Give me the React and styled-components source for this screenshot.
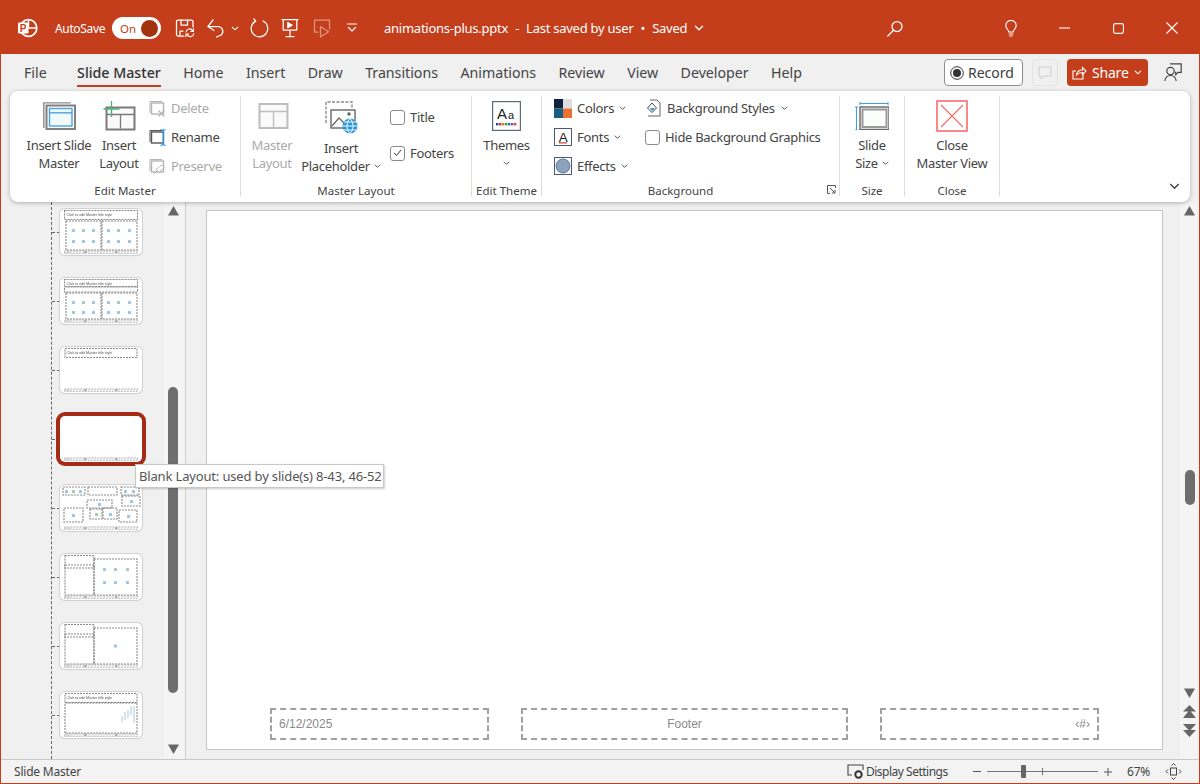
import React from "react";
import styled, { createGlobalStyle } from "styled-components";

const ORANGE = "#C43E1C";
const FONT = `"Noto Sans", "Open Sans", "Liberation Sans", sans-serif`;

const Global = createGlobalStyle`
  html, body { margin: 0; padding: 0; background: ${ORANGE}; }
  * { box-sizing: border-box; }
  svg { display: block; flex: none; }
`;

const Page = styled.div`
  position: relative; width: 1200px; height: 784px; overflow: hidden;
  display: flex; flex-direction: column;
  font-family: ${FONT}; color: #424242; background: ${ORANGE};
`;

/* ---------- title bar ---------- */
const TitleBar = styled.header`
  height: 54px; flex: none; display: flex; align-items: center; padding-top: 2px; color: #fff;
`;
const Slot = styled.div`
  margin-left: ${(p) => p.$ml}px; width: ${(p) => p.$w}px; flex: none;
  display: flex; justify-content: center; align-items: center;
  opacity: ${(p) => p.$fade || 1};
`;
const AutoSaveLabel = styled.span`
  margin-left: 17px; width: 48px; flex: none; font-size: 12px; letter-spacing: -0.35px; white-space: nowrap;
`;
const Toggle = styled.div`
  margin-left: 9px; width: 49px; height: 22px; flex: none; border-radius: 11px; background: #fff;
  display: flex; align-items: center; justify-content: space-between; padding: 0 3px 0 8px;
  color: ${ORANGE}; font-size: 11.5px;
`;
const Knob = styled.span`
  width: 17px; height: 17px; border-radius: 50%; background: #A3330F;
`;
const DocTitle = styled.div`
  margin-left: 27px; width: 320px; flex: none; display: flex; align-items: center; gap: 7px;
  font-size: 13px; letter-spacing: -0.25px; white-space: nowrap;
`;

/* ---------- window frame ---------- */
const Frame = styled.div`
  flex: 1; min-height: 0; display: flex; flex-direction: column;
  margin: 0 1px 1px; background: #f0f0f0;
`;
const TabRow = styled.nav`
  height: 36px; flex: none; display: flex; align-items: flex-start; padding: 6px 17px 0 23px; gap: 22.4px;
`;
const Tab = styled.div`
  height: 27px; line-height: 25px; font-size: 14.2px; white-space: nowrap;
  margin-left: ${(p) => (p.$active ? 8 : 0)}px;
  color: ${(p) => (p.$active ? "#333" : "#444")};
  font-weight: ${(p) => (p.$active ? 500 : 400)};
  border-bottom: 2px solid ${(p) => (p.$active ? ORANGE : "transparent")};
`;
const TabTools = styled.div`
  margin: -1px 0 0 auto; display: flex; align-items: flex-start; gap: 9px; height: 27px;
`;
const RecordButton = styled.div`
  width: 79px; height: 27px; background: #fff; border: 1px solid #8f8f8f; border-radius: 4px;
  display: flex; align-items: center; gap: 4px; padding-left: 5px; font-size: 14px; color: #3c3c3c;
`;
const CommentButton = styled.div`
  width: 26px; height: 27px; border: 1px solid #e4e4e4; border-radius: 4px; display: flex; align-items: center; justify-content: center;
`;
const ShareButton = styled.div`
  width: 81px; height: 27px; background: ${ORANGE}; color: #fff; border-radius: 4px;
  display: flex; align-items: center; gap: 5px; padding-left: 5px; font-size: 14px; letter-spacing: -0.2px;
`;
const PersonSlot = styled.div` margin: 3px 0 0 7px; `;

/* ---------- ribbon ---------- */
const Ribbon = styled.section`
  position: relative; height: 111px; flex: none; margin: 1px 9px 0; background: #fff; border-radius: 8px;
  box-shadow: 0 1px 4px rgba(0,0,0,.28); display: flex; align-items: flex-start; padding-top: 5px;
`;
const Group = styled.div`
  position: relative; width: ${(p) => p.$w}px; height: 100px; flex: none; display: flex; flex-direction: column;
  border-right: 1px solid #dcdcdc;
`;
const GroupBody = styled.div`
  flex: 1; min-height: 0; display: flex; padding-left: ${(p) => p.$pl || 0}px;
`;
const GroupLabel = styled.div`
  height: 12px; line-height: 14px; text-align: center; font-size: 11.5px; color: #444; white-space: nowrap;
  padding-right: ${(p) => p.$pr || 0}px;
`;
const Big = styled.div`
  width: ${(p) => p.$w}px; margin-left: ${(p) => p.$ml || 0}px; flex: none; display: flex; flex-direction: column; align-items: center;
  color: ${(p) => (p.$off ? "#aaa" : "#444")};
`;
const BigIcon = styled.div`
  height: ${(p) => p.$h || 40}px; flex: none; display: flex; align-items: center; justify-content: center;
`;
const BigLine = styled.div`
  height: 18px; line-height: 18px; font-size: 13px; letter-spacing: -0.32px; white-space: nowrap; display: flex; align-items: center; gap: 4px;
`;
const SmallColumn = styled.div`
  width: ${(p) => p.$w || "auto"}; margin-left: ${(p) => p.$ml || 0}px; padding-top: ${(p) => p.$pt || 0}px;
  flex: none; display: flex; flex-direction: column; gap: ${(p) => p.$gap ?? 5}px;
`;
const SmallRow = styled.div`
  height: 24px; display: flex; align-items: center; gap: ${(p) => p.$gap ?? 5}px; font-size: 13px; letter-spacing: -0.3px; white-space: nowrap;
  color: ${(p) => (p.$off ? "#aaa" : "#444")};
`;
const Check = styled.span`
  width: 15px; height: 15px; flex: none; border: 1px solid #8a8a8a; border-radius: 3px; background: #fff;
  display: flex; align-items: center; justify-content: center;
`;
const Launcher = styled.div`
  position: absolute; right: 3px; bottom: 2px;
`;
const Collapse = styled.div`
  position: absolute; right: 10px; bottom: 12px;
`;

/* ---------- body ---------- */
const Body = styled.main`
  flex: 1; min-height: 0; display: flex;
`;
const Panel = styled.aside`
  width: 163px; flex: none; overflow: hidden;
`;
const Tree = styled.div`
  height: 100%; margin-left: 50px; border-left: 1px dashed #666; padding-top: 7px; display: flex; flex-direction: column; gap: 23px;
`;
const ThumbRow = styled.div`
  display: flex; align-items: center;
`;
const Tick = styled.span`
  width: 8px; border-top: 1px dashed #666; flex: none;
`;
const Thumb = styled.div`
  width: 82px; height: 46px; flex: none; background: #fff; border-radius: 5px; overflow: hidden;
  box-shadow: ${(p) => (p.$on ? "0 0 0 4px #A62B16" : "0 0 0 1px #d2d2d2, 0 1px 1px rgba(0,0,0,.12)")};
`;
const MiniSvg = styled.svg`
  filter: blur(0.3px);
`;
const Scroll = styled.div`
  width: ${(p) => p.$w}px; flex: none; background: #f4f4f4; display: flex; flex-direction: column; align-items: center; padding-top: 4px;
  padding-right: ${(p) => (p.$edge ? 3 : 0)}px;
  border-right: ${(p) => (p.$edge ? "1px solid #cfcfcf" : "none")};
`;
const ScrollThumb = styled.div`
  width: 10px; height: ${(p) => p.$h}px; margin-top: ${(p) => p.$mt}px; border-radius: 5px; background: #6e6e6e; flex: none;
`;
const ArrowSlot = styled.div`
  margin-top: ${(p) => p.$mt || 0}px; flex: none;
`;
const Stage = styled.div`
  flex: 1; min-width: 0; padding: 8px 17px 9px 20px; display: flex;
`;
const Slide = styled.div`
  flex: 1; background: #fff; border: 1px solid #c6c6c6; display: flex; align-items: flex-end; gap: 32px; padding: 0 0 9px 63px;
`;
const Placeholder = styled.div`
  width: ${(p) => p.$w}px; height: 32px; flex: none; border: 2px dashed #a0a0a0; font-family: "Liberation Sans", sans-serif;
  font-size: 12px; color: #8a8a8a; display: flex; align-items: center; padding: 0 7px;
  justify-content: ${(p) => p.$align || "flex-start"};
`;
const Tooltip = styled.div`
  position: absolute; left: 135px; top: 464px; width: 249px; height: 24px; background: #fff; border: 1px solid #c8c8c8;
  box-shadow: 1px 1px 2px rgba(0,0,0,.2); font-size: 13px; letter-spacing: -0.16px; color: #555; line-height: 22px; padding-left: 3px; white-space: nowrap;
`;

/* ---------- status bar ---------- */
const Status = styled.footer`
  height: 24px; flex: none; background: #f3f3f3; border-top: 1px solid #c9c9c9; display: flex; align-items: center;
  font-size: 12px; letter-spacing: -0.2px; color: #444; padding-left: 13px;
`;
const StatusText = styled.span`
  margin-left: ${(p) => p.$ml || 0}px; width: ${(p) => p.$w}px; flex: none; white-space: nowrap;
  letter-spacing: ${(p) => p.$ls ?? -0.2}px;
`;
const SliderTrack = styled.div`
  position: relative; margin-left: 6px; width: 111px; height: 1px; background: #777; flex: none;
`;
const SliderHandle = styled.span`
  position: absolute; left: 34px; top: -6px; width: 5px; height: 13px; background: #666; border-radius: 1px;
`;
const SliderMark = styled.span`
  position: absolute; left: 55px; top: -3px; width: 1px; height: 7px; background: #777;
`;

/* ---------- icons ---------- */
const Stroke = { fill: "none", stroke: "#fff", strokeWidth: 1.25, strokeLinecap: "round", strokeLinejoin: "round" };

const Chev = ({ w = 8, color = "#444", sw = 1.1 }) => (
  <svg width={w} height={w * 0.6} viewBox="0 0 8 5"><path d="M.8.8 4 4l3.2-3.2" fill="none" stroke={color} strokeWidth={sw} /></svg>
);
const Logo = () => (
  <svg width="20" height="20" viewBox="0 0 20 20">
    <circle cx="10.5" cy="10" r="8.3" fill="none" stroke="#fff" strokeWidth="1.8" />
    <path d="M10.5 2v8h8" fill="none" stroke="#fff" strokeWidth="1.4" />
    <rect x="0" y="4.5" width="10.5" height="11" rx="1.2" fill="#fff" />
    <text x="5.2" y="13.6" textAnchor="middle" fontFamily="Liberation Sans" fontWeight="700" fontSize="10" fill={ORANGE}>P</text>
  </svg>
);
const SaveSync = () => (
  <svg width="20" height="20" viewBox="0 0 20 20" {...Stroke}>
    <path d="M9 18H3a1.5 1.5 0 0 1-1.5-1.5v-13A1.5 1.5 0 0 1 3 2h13.5A1.5 1.5 0 0 1 18 3.5V9" />
    <path d="M6 2v5h6.5V2M5 18v-5h3" />
    <path d="M11 14a3.6 3.6 0 0 1 6.3-1.8l1 1.1M18.8 15.5a3.6 3.6 0 0 1-6.4 1.7l-1-1M18.5 10.8v2.6h-2.6M11 18.6V16h2.6" strokeWidth="1.1" />
  </svg>
);
const Undo = () => (
  <svg width="18" height="19" viewBox="0 0 18 19" {...Stroke}>
    <path d="M1 7.500h10a5 5 0 0 1 3.500 8.400L9.500 18" />
    <path d="M6 1 1 7.500l6 4" />
  </svg>
);
const Redo = () => (
  <svg width="20" height="20" viewBox="0 0 20 20" {...Stroke}>
    <path d="M6.500 3.200A8.300 8.300 0 1 0 14 3" />
    <path d="M5 .8l1.700 2.500L4 5" />
  </svg>
);
const Present = () => (
  <svg width="18" height="20" viewBox="0 0 18 20" {...Stroke}>
    <path d="M1 1.500h16M2.200 1.500v10.500h13.600V1.500M9 12v6M5 18.500h8" />
    <path d="M7 4.500l4.500 2.700L7 9.800z" fill="#fff" strokeWidth="1" />
  </svg>
);
const Ghost = () => (
  <svg width="18" height="20" viewBox="0 0 18 20" {...Stroke}>
    <path d="M5 14H1.500V2h15v9" />
    <path d="M7.500 8.500l8 5.200-8 5.300z" />
  </svg>
);
const MoreChev = () => (
  <svg width="10" height="10" viewBox="0 0 10 10" {...Stroke} strokeWidth="1.1"><path d="M.5 1h9M1.500 4.500 5 8l3.500-3.500" /></svg>
);
const Search = () => (
  <svg width="16" height="17" viewBox="0 0 16 17" {...Stroke}>
    <circle cx="10" cy="6.500" r="5" /><path d="M6.500 10.200.8 16" />
  </svg>
);
const Bulb = () => (
  <svg width="12" height="17" viewBox="0 0 12 17" {...Stroke} strokeWidth="1.1">
    <path d="M3.800 12c0-2-3-3.300-3-6.400a5.200 5.200 0 0 1 10.400 0c0 3.100-3 4.400-3 6.400z" /><path d="M4 14h4M4.800 16h2.400" />
  </svg>
);
const Minimize = () => <svg width="11" height="2" viewBox="0 0 11 2"><path d="M0 1h11" stroke="#fff" strokeWidth="1.1" /></svg>;
const Maximize = () => <svg width="11" height="11" viewBox="0 0 11 11"><rect x=".6" y=".6" width="9.800" height="9.800" rx="1.800" fill="none" stroke="#fff" strokeWidth="1.100" /></svg>;
const CloseX = () => <svg width="12" height="12" viewBox="0 0 12 12"><path d="M.5.5l11 11M11.500.5l-11 11" stroke="#fff" strokeWidth="1.100" /></svg>;

const RecordDot = () => (
  <svg width="14" height="14" viewBox="0 0 14 14"><circle cx="7" cy="7" r="6.300" fill="none" stroke="#333" strokeWidth="1" /><circle cx="7" cy="7" r="4" fill="#333" /></svg>
);
const Comment = () => (
  <svg width="14" height="14" viewBox="0 0 14 14"><path d="M1 1h12v9H6l-3 3v-3H1z" fill="none" stroke="#cfcfcf" strokeWidth="1" /></svg>
);
const ShareIcon = () => (
  <svg width="15" height="15" viewBox="0 0 15 15" fill="none" stroke="#fff" strokeWidth="1.100"><path d="M11 9v5H1V6h3" /><path d="M4.500 10c.5-3.500 3-5 6-5V2.500L14 6l-3.500 3.500V7.500c-2.500 0-4.500.8-6 2.500z" /></svg>
);
const PersonComment = () => (
  <svg width="18" height="20" viewBox="0 0 18 20" fill="none" stroke="#444" strokeWidth="1.200">
    <circle cx="6.500" cy="9" r="3.700" /><path d="M.8 19c.5-3.500 2.800-5.500 5.700-5.500s5.200 2 5.700 5.500" />
    <path d="M6 1.800h11.200v8.500h-3l-2.500 2.300v-2.300H11" />
  </svg>
);

const InsertMasterIcon = () => (
  <svg width="33" height="28" viewBox="0 0 33 28" fill="none">
    <path d="M.8 26V.9h27" stroke="#8a8a8a" strokeWidth="1.400" />
    <rect x="3.500" y="3.500" width="28.500" height="23.500" fill="#fff" stroke="#808080" strokeWidth="2" />
    <rect x="6.500" y="6.500" width="22.500" height="17.500" fill="#f2f9fd" stroke="#4aa3df" strokeWidth="1.400" />
    <path d="M6.500 10.800h22.500" stroke="#4aa3df" strokeWidth="1.400" />
  </svg>
);
const LayoutFrame = ({ c, plus }) => (
  <svg width="33" height="30" viewBox="0 0 33 30" fill="none">
    <rect x="3.500" y={plus ? 6.500 : 3} width="28" height={plus ? 22 : 24} fill="#fafafa" stroke={c} strokeWidth="2" />
    <path d={plus ? "M4 13.500h27M17.500 13.500v14" : "M3 10.500h28M17.500 10.500v16"} stroke={c} strokeWidth="1.300" />
    {plus && <path d="M8.500 0v16M.5 8h16" stroke="#4bb074" strokeWidth="1.300" />}
  </svg>
);
const SmallFrame = ({ c = "#b5b5b5", children }) => (
  <svg width="17" height="17" viewBox="0 0 17 17" fill="none">
    <path d="M1 13V1.500h12" stroke={c} strokeWidth="1" />
    <rect x="2.500" y="3" width="12" height="11" fill="#fff" stroke={c} strokeWidth="1.400" />
    {children}
  </svg>
);
const DeleteIcon = () => <SmallFrame><path d="M9.500 10.500l6 6M15.500 10.500l-6 6" stroke="#b5b5b5" strokeWidth="1.200" /></SmallFrame>;
const RenameIcon = () => (
  <SmallFrame c="#555">
    <path d="M11.500.7c1.800 0 2.700.5 2.700 1.600v12.400c0 1.100.9 1.600 2.300 1.600M16.500.7c-1.400 0-2.300.5-2.300 1.600M14.200 14.700c0 1.100-.9 1.600-2.700 1.600" stroke="#2f9be6" strokeWidth="1.300" />
  </SmallFrame>
);
const PreserveIcon = () => <SmallFrame><path d="M12.500 7l3 3-2 .8-2.500 2.500-.5 1.500-3.500-3.500 1.500-.6 2.500-2.500zM8 12.500l-3 3.500" stroke="#b5b5b5" strokeWidth="1" fill="#fff" /></SmallFrame>;
const PlaceholderIcon = () => (
  <svg width="33" height="34" viewBox="0 0 33 34" fill="none">
    <path d="M1 22V1h26v6" stroke="#8a8a8a" strokeWidth="1.400" strokeDasharray="3 1.500" />
    <rect x="6" y="9" width="24" height="18" fill="#fff" stroke="#666" strokeWidth="1.400" />
    <path d="M7 25l7-8 7 7" stroke="#666" strokeWidth="1.200" />
    <circle cx="24" cy="13" r="1.800" fill="#666" />
    <circle cx="25" cy="25" r="7.500" fill="#2f97d8" />
    <path d="M17.500 25h15M25 17.500c-4 4-4 11 0 15M25 17.500c4 4 4 11 0 15M19 21h12M19 29h12" stroke="#fff" strokeWidth=".9" />
  </svg>
);
const ThemesIcon = () => (
  <svg width="29" height="30" viewBox="0 0 29 30" fill="none">
    <rect x=".6" y=".6" width="27.800" height="28.800" fill="#fff" stroke="#5f6b78" strokeWidth="1.200" />
    <text x="5" y="18" fontFamily="Liberation Sans" fontSize="15" fill="#222">A</text>
    <text x="16" y="18" fontFamily="Liberation Sans" fontSize="11" fill="#222">a</text>
    {["#1f4e79", "#c0392b", "#e67e22", "#2e9e6b", "#2f6fbf", "#7d4fa0", "#d04a4a"].map((c, i) => (
      <rect key={c} x={4 + i * 3} y="22" width="2.400" height="2.400" fill={c} />
    ))}
  </svg>
);
const ColorsIcon = () => (
  <svg width="18" height="19" viewBox="0 0 18 19">
    <rect width="9" height="9.500" fill="#13233f" /><rect x="9" width="9" height="9.500" fill="#dedede" />
    <rect y="9.500" width="9" height="9.500" fill="#156082" /><rect x="9" y="9.500" width="9" height="9.500" fill="#E97132" />
  </svg>
);
const FontsIcon = () => (
  <svg width="18" height="18" viewBox="0 0 18 18">
    <rect x=".5" y=".5" width="17" height="17" fill="#fff" stroke="#4a5a78" />
    <text x="9" y="14" textAnchor="middle" fontFamily="Liberation Sans" fontSize="13.500" fill="#222">A</text>
    <rect x="5" y="14.300" width="8" height="1.200" fill="#d8432e" />
  </svg>
);
const EffectsIcon = () => (
  <svg width="18" height="18" viewBox="0 0 18 18">
    <rect x=".5" y=".5" width="17" height="17" fill="#fff" stroke="#4a5a78" />
    <circle cx="9" cy="9" r="7" fill="#8ba3bd" stroke="#5f7a96" />
  </svg>
);
const BgStylesIcon = () => (
  <svg width="16" height="18" viewBox="0 0 16 18" fill="none">
    <path d="M5 1h7l3 3v13H3" stroke="#666" strokeWidth="1" />
    <path d="M7 4l4.500 5L7 13.500 2.500 9z" fill="#fff" stroke="#444" strokeWidth="1" />
    <path d="M5 9h5L7 12.500z" fill="#3e9fe0" />
  </svg>
);
const SlideSizeIcon = () => (
  <svg width="34" height="28" viewBox="0 0 34 28" fill="none">
    <path d="M5 1.500h28M5 0v3M33 0v3M1.500 5v23M0 5h3M0 28h3" stroke="#3e9fe0" strokeWidth="1.100" />
    <rect x="5" y="5" width="29" height="22.500" fill="#f8f8f8" stroke="#666" strokeWidth="1.400" />
    <rect x="7.500" y="7.500" width="24" height="17.500" fill="#fbfdfb" stroke="#999" strokeWidth="2" />
  </svg>
);
const CloseMasterIcon = () => (
  <svg width="32" height="32" viewBox="0 0 32 32" fill="none">
    <rect x="1" y="1" width="30" height="30" fill="#fff" stroke="#f47c7c" strokeWidth="1.800" />
    <path d="M5 5l22 22M27 5L5 27" stroke="#f26a6a" strokeWidth="1.100" />
  </svg>
);
const LauncherIcon = () => (
  <svg width="9" height="9" viewBox="0 0 9 9" fill="none" stroke="#555" strokeWidth="1"><path d="M8.500 3V.5H.5v8H3" /><path d="M3 3l5 5M8 5v3H5" /></svg>
);
const Tri = ({ up, c = "#666" }) => (
  <svg width="11" height="10" viewBox="0 0 11 10"><path d={up ? "M5.500 0 11 9.500H0z" : "M0 .5h11L5.500 10z"} fill={c} /></svg>
);
const PagePrev = () => (
  <svg width="13" height="13" viewBox="0 0 13 13"><path d="M6.500 0 13 6.500H0zM6.500 5 13 13H0z" fill="#666" /></svg>
);
const PageNext = () => (
  <svg width="13" height="13" viewBox="0 0 13 13"><path d="M0 0h13L6.500 7zM0 6h13l-6.500 7z" fill="#666" /></svg>
);
const DisplayIcon = () => (
  <svg width="17" height="15" viewBox="0 0 17 15" fill="none">
    <path d="M5 11H1V1h15v5" stroke="#444" strokeWidth="1.100" />
    <circle cx="11.500" cy="10.500" r="3.200" stroke="#333" strokeWidth="2" />
  </svg>
);
const FitIcon = () => (
  <svg width="17" height="17" viewBox="0 0 17 17" fill="none" stroke="#444" strokeWidth="1">
    <rect x="5.500" y="5" width="6" height="7" /><path d="M6.500 2.500l2-2 2 2M6.500 14.500l2 2 2-2M3 6.500l-2 2 2 2M14 6.500l2 2-2 2" />
  </svg>
);

/* ---------- slide thumbnails (miniature drawings) ---------- */
const Box = ({ x, y, w, h }) => (
  <rect x={x} y={y} width={w} height={h} fill="none" stroke="#8a8a8a" strokeWidth="1.100" strokeDasharray="2 1" />
);
const Dot = ({ x, y, c = "#7fb7e0" }) => <rect x={x} y={y} width="3" height="3" rx=".6" fill={c} opacity=".8" />;
const Head = () => (
  <text x="6.500" y="7" fontFamily="Liberation Sans" fontSize="3.600" fill="#555">Click to edit Master title style</text>
);
const Foot = () => (
  <>
    <rect x="4.500" y="42" width="73" height="2.200" fill="none" stroke="#a0a0a0" strokeWidth=".9" strokeDasharray="2 1" />
    <rect x="5.500" y="42.500" width="5" height="1.200" fill="#ccc" />
    <rect x="24" y="42.500" width="2.500" height="1.200" fill="#888" />
    <rect x="55" y="42.500" width="2.500" height="1.200" fill="#888" />
  </>
);
const IconGrid = ({ xs, y1, y2 }) => (
  <>
    {xs.map((x, i) => <Dot key={`a${x}`} x={x} y={y1} c={i === 1 ? "#86c29a" : "#8db8d8"} />)}
    {xs.map((x) => <Dot key={`b${x}`} x={x} y={y2} />)}
  </>
);
const Layouts = {
  two: () => (<><Head /><Box x={4.500} y={1.500} w={73} h={9} /><Box x={6} y={12} w={35} h={29} /><Box x={42} y={12} w={35} h={29} /><IconGrid xs={[12, 22, 32]} y1={20} y2={31} /><IconGrid xs={[47, 57, 68]} y1={20} y2={31} /><Foot /></>),
  twoSub: () => (<><Head /><Box x={4.500} y={1.500} w={73} h={7} /><Box x={4.500} y={9} w={73} h={5} /><Box x={6} y={15} w={35} h={26} /><Box x={42} y={15} w={35} h={26} /><IconGrid xs={[12, 22, 32]} y1={23} y2={33} /><IconGrid xs={[47, 57, 68]} y1={23} y2={33} /><Foot /></>),
  title: () => (<><Head /><Box x={5} y={1.500} w={72} h={9} /><Foot /></>),
  blank: () => <Foot />,
  collage: () => (
    <>
      <Box x={3} y={2} w={22} h={8} /><Box x={28} y={2} w={29} h={8} /><Box x={61} y={2} w={18} h={8} /><Box x={62} y={11} w={18} h={10} />
      <Box x={4} y={23} w={19} h={14} /><Box x={27} y={15} w={25} h={8} /><Box x={30} y={24} w={12} h={10} /><Box x={43} y={23} w={14} h={11} /><Box x={59} y={25} w={18} h={12} />
      <Dot x={5} y={5} /><Dot x={12} y={5} c="#86c29a" /><Dot x={19} y={5} /><Dot x={64} y={5} /><Dot x={72} y={5} /><Dot x={70} y={15} /><Dot x={12} y={29} /><Dot x={38} y={18} /><Dot x={35} y={28} c="#86c29a" /><Dot x={49} y={28} /><Dot x={67} y={30} />
      <Foot />
    </>
  ),
  sideIcons: () => (<><Box x={5} y={1.500} w={29} h={39.500} /><Box x={5} y={11} w={29} h={3} /><Box x={34} y={5} w={43} h={36} /><IconGrid xs={[43, 54, 66]} y1={14} y2={27} /><Foot /></>),
  sidePic: () => (<><Box x={5} y={1.500} w={29} h={39.500} /><Box x={5} y={11} w={29} h={3} /><Box x={34} y={5} w={43} h={36} /><Dot x={54} y={21.500} /><Foot /></>),
  chart: () => (
    <>
      <Head /><Box x={5} y={1.500} w={72} h={9} /><Box x={5} y={11} w={72} h={30} />
      <path d="M62 30v-6M65 28v-8M68 26v-8M71 23v-9M74 31V14" stroke="#a9c7dc" strokeWidth="1" />
      <Foot />
    </>
  ),
};
const MiniSlide = ({ kind }) => {
  const Drawing = Layouts[kind];
  return <MiniSvg width="82" height="46" viewBox="0 0 82 46"><Drawing /></MiniSvg>;
};

const thumbs = ["two", "twoSub", "title", "blank", "collage", "sideIcons", "sidePic", "chart"];
const tabs = ["File", "Slide Master", "Home", "Insert", "Draw", "Transitions", "Animations", "Review", "View", "Developer", "Help"];

export default function App() {
  return (
    <Page>
      <Global />
      <TitleBar>
        <Slot $ml={18} $w={20}><Logo /></Slot>
        <AutoSaveLabel>AutoSave</AutoSaveLabel>
        <Toggle>On<Knob /></Toggle>
        <Slot $ml={14} $w={20}><SaveSync /></Slot>
        <Slot $ml={12} $w={18}><Undo /></Slot>
        <Slot $ml={6} $w={8}><Chev color="#fff" /></Slot>
        <Slot $ml={10} $w={20}><Redo /></Slot>
        <Slot $ml={12} $w={18}><Present /></Slot>
        <Slot $ml={14} $w={18} $fade={0.45}><Ghost /></Slot>
        <Slot $ml={16} $w={10}><MoreChev /></Slot>
        <DocTitle>
          <span>animations-plus.pptx</span><span>-</span><span>Last saved by user</span><span>•</span><span>Saved</span>
          <Chev w={10} color="#fff" />
        </DocTitle>
        <Slot $ml={183} $w={16}><Search /></Slot>
        <Slot $ml={102} $w={12}><Bulb /></Slot>
        <Slot $ml={42} $w={11}><Minimize /></Slot>
        <Slot $ml={43} $w={11}><Maximize /></Slot>
        <Slot $ml={42} $w={12}><CloseX /></Slot>
      </TitleBar>

      <Frame>
        <TabRow>
          {tabs.map((t) => <Tab key={t} $active={t === "Slide Master"}>{t}</Tab>)}
          <TabTools>
            <RecordButton><RecordDot />Record</RecordButton>
            <CommentButton><Comment /></CommentButton>
            <ShareButton><ShareIcon />Share<Chev color="#fff" /></ShareButton>
            <PersonSlot><PersonComment /></PersonSlot>
          </TabTools>
        </TabRow>

        <Ribbon>
          <Group $w={231}>
            <GroupBody $pl={16}>
              <Big $w={66}><BigIcon><InsertMasterIcon /></BigIcon><BigLine>Insert Slide</BigLine><BigLine>Master</BigLine></Big>
              <Big $w={40} $ml={7}><BigIcon><LayoutFrame c="#7a7a7a" plus /></BigIcon><BigLine>Insert</BigLine><BigLine>Layout</BigLine></Big>
              <SmallColumn $ml={10}>
                <SmallRow $off><DeleteIcon />Delete</SmallRow>
                <SmallRow><RenameIcon />Rename</SmallRow>
                <SmallRow $off><PreserveIcon />Preserve</SmallRow>
              </SmallColumn>
            </GroupBody>
            <GroupLabel>Edit Master</GroupLabel>
          </Group>

          <Group $w={231}>
            <GroupBody $pl={3}>
              <Big $w={56} $off><BigIcon><LayoutFrame c="#bdbdbd" /></BigIcon><BigLine>Master</BigLine><BigLine>Layout</BigLine></Big>
              <Big $w={70} $ml={6}><BigIcon $h={43}><PlaceholderIcon /></BigIcon><BigLine>Insert</BigLine><BigLine>Placeholder<Chev w={7} /></BigLine></Big>
              <SmallColumn $ml={14} $pt={9} $gap={12}>
                <SmallRow><Check />Title</SmallRow>
                <SmallRow><Check><svg width="9" height="8" viewBox="0 0 9 8"><path d="M1 4l2.500 2.500L8 1" fill="none" stroke="#333" strokeWidth="1" /></svg></Check>Footers</SmallRow>
              </SmallColumn>
            </GroupBody>
            <GroupLabel>Master Layout</GroupLabel>
          </Group>

          <Group $w={70}>
            <GroupBody>
              <Big $w={69}><BigIcon><ThemesIcon /></BigIcon><BigLine>Themes</BigLine><BigLine><Chev w={7} /></BigLine></Big>
            </GroupBody>
            <GroupLabel>Edit Theme</GroupLabel>
          </Group>

          <Group $w={298}>
            <GroupBody $pl={12}>
              <SmallColumn $w="91px">
                <SmallRow><ColorsIcon />Colors<Chev w={7} /></SmallRow>
                <SmallRow><FontsIcon />Fonts<Chev w={7} /></SmallRow>
                <SmallRow><EffectsIcon />Effects<Chev w={7} /></SmallRow>
              </SmallColumn>
              <SmallColumn>
                <SmallRow $gap={6}><BgStylesIcon />Background Styles<Chev w={7} /></SmallRow>
                <SmallRow $gap={5}><Check />Hide Background Graphics</SmallRow>
              </SmallColumn>
            </GroupBody>
            <GroupLabel $pr={20}>Background</GroupLabel>
            <Launcher><LauncherIcon /></Launcher>
          </Group>

          <Group $w={65}>
            <GroupBody>
              <Big $w={64}><BigIcon><SlideSizeIcon /></BigIcon><BigLine>Slide</BigLine><BigLine>Size<Chev w={7} /></BigLine></Big>
            </GroupBody>
            <GroupLabel>Size</GroupLabel>
          </Group>

          <Group $w={95}>
            <GroupBody>
              <Big $w={94}><BigIcon><CloseMasterIcon /></BigIcon><BigLine>Close</BigLine><BigLine>Master View</BigLine></Big>
            </GroupBody>
            <GroupLabel>Close</GroupLabel>
          </Group>
          <Collapse><Chev w={11} color="#444" /></Collapse>
        </Ribbon>

        <Body>
          <Panel>
            <Tree>
              {thumbs.map((k) => (
                <ThumbRow key={k}>
                  <Tick />
                  <Thumb $on={k === "blank"}><MiniSlide kind={k} /></Thumb>
                </ThumbRow>
              ))}
            </Tree>
          </Panel>
          <Scroll $w={22} $edge>
            <ArrowSlot><Tri up /></ArrowSlot>
            <ScrollThumb $mt={171} $h={306} />
            <ArrowSlot $mt={51}><Tri /></ArrowSlot>
          </Scroll>
          <Stage>
            <Slide>
              <Placeholder $w={219}>6/12/2025</Placeholder>
              <Placeholder $w={327} $align="center">Footer</Placeholder>
              <Placeholder $w={219} $align="flex-end">‹#›</Placeholder>
            </Slide>
          </Stage>
          <Scroll $w={19}>
            <ArrowSlot><Tri up /></ArrowSlot>
            <ScrollThumb $mt={254} $h={35} />
            <ArrowSlot $mt={183}><Tri /></ArrowSlot>
            <ArrowSlot $mt={7}><PagePrev /></ArrowSlot>
            <ArrowSlot $mt={6}><PageNext /></ArrowSlot>
          </Scroll>
        </Body>

        <Status>
          <StatusText $w={833}>Slide Master</StatusText>
          <DisplayIcon />
          <StatusText $ml={2} $w={107} $ls={-0.5}>Display Settings</StatusText>
          <Slot $ml={0} $w={8}><svg width="8" height="1" viewBox="0 0 8 1"><path d="M0 .5h8" stroke="#555" /></svg></Slot>
          <SliderTrack><SliderHandle /><SliderMark /></SliderTrack>
          <Slot $ml={6} $w={8}><svg width="8" height="8" viewBox="0 0 8 8"><path d="M0 4h8M4 0v8" stroke="#555" /></svg></Slot>
          <StatusText $ml={15} $w={38}>67%</StatusText>
          <FitIcon />
        </Status>
      </Frame>

      <Tooltip>Blank Layout: used by slide(s) 8-43, 46-52</Tooltip>
    </Page>
  );
}
